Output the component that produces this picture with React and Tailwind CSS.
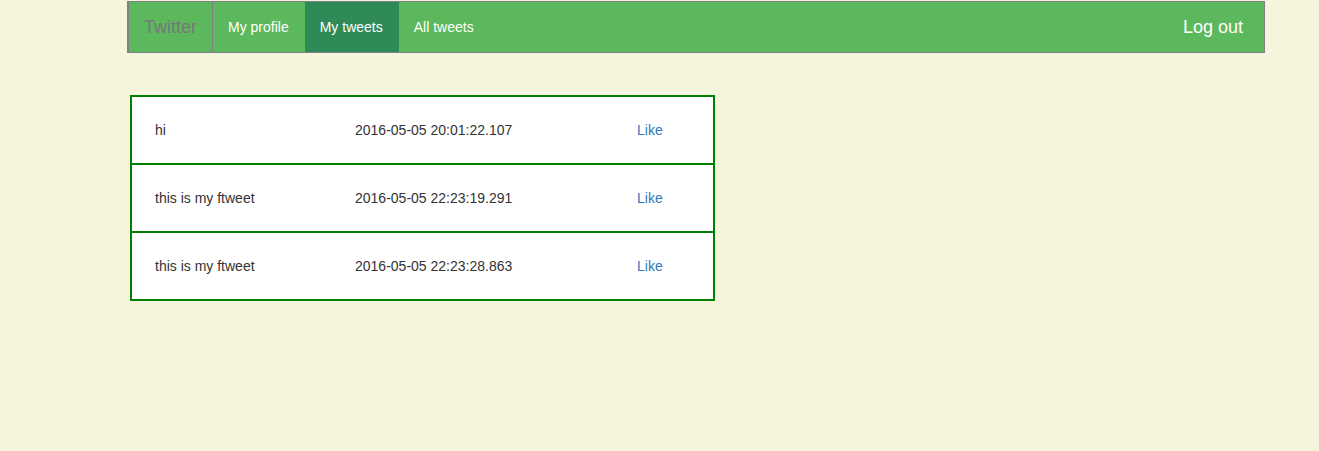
export default function App() {
  const tweets = [
    { text: 'hi', date: '2016-05-05 20:01:22.107' },
    { text: 'this is my ftweet', date: '2016-05-05 22:23:19.291' },
    { text: 'this is my ftweet', date: '2016-05-05 22:23:28.863' },
  ]

  return (
    <div className="min-h-[451px] bg-[#f5f4dc] pt-[1px] text-[14px] text-[#333] [font-family:'Liberation_Sans',Arial,sans-serif]">
      <nav className="ml-[127px] flex h-[52px] w-[1138px] items-stretch border border-[#808080] bg-[#5cb85c]">
        <a className="flex items-center border-x border-[#808080] px-[15px] text-[18px] text-[#777]">Twitter</a>
        <a className="flex items-center pl-[15px] pr-[16px] text-white">My profile</a>
        <a className="flex items-center bg-[#2e8b57] pl-[15px] pr-[16px] text-white">My tweets</a>
        <a className="flex items-center pl-[15px] pr-[16px] text-white">All tweets</a>
        <a className="ml-auto flex items-center pr-[21px] text-[18px] text-white">Log out</a>
      </nav>

      <table className="ml-[130px] mt-[42px] w-[585px] border-collapse border-2 border-[#008000] bg-white">
        <tbody>
          {tweets.map((t, i) => (
            <tr key={i} className="h-[68px] border-t-2 border-[#008000]">
              <td className="w-[201px] pl-[23px]">{t.text}</td>
              <td className="w-[282px] pl-[23px]">{t.date}</td>
              <td className="pl-[23px]"><a className="text-[#337ab7]">Like</a></td>
            </tr>
          ))}
        </tbody>
      </table>
    </div>
  )
}
